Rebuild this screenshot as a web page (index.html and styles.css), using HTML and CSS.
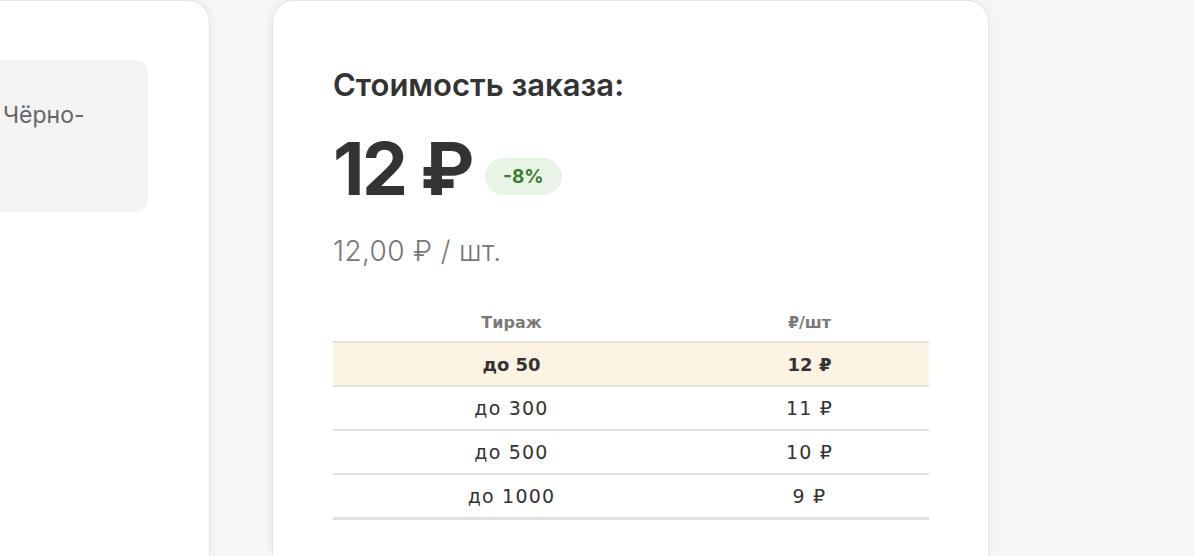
FILE: index.html
```html
<!DOCTYPE html>
<html lang="ru">
<head>
<meta charset="utf-8">
<title>Стоимость заказа</title>
<link rel="stylesheet" href="styles.css">
</head>
<body>
<div class="page">
  <section class="card card-left">
    <div class="option-box">
      <span class="option-text">Чёрно-</span>
    </div>
  </section>
  <section class="card card-right">
    <h2 class="title">Стоимость заказа:</h2>
    <div class="total">
      <span class="total-price">12 ₽</span>
      <span class="badge">-8%</span>
    </div>
    <div class="unit">12,00 ₽ / шт.</div>
    <table class="tiers">
      <thead>
        <tr><th class="c1">Тираж</th><th class="c2">₽/шт</th></tr>
      </thead>
      <tbody>
        <tr class="active"><td>до 50</td><td>12 ₽</td></tr>
        <tr><td>до 300</td><td>11 ₽</td></tr>
        <tr><td>до 500</td><td>10 ₽</td></tr>
        <tr class="last"><td>до 1000</td><td>9 ₽</td></tr>
      </tbody>
    </table>
  </section>
</div>
</body>
</html>
```

FILE: styles.css
```css
* { box-sizing: border-box; }
html, body {
  margin: 0;
  padding: 0;
  background: #f6f6f6;
  overflow: hidden;
  height: 556px;
}
body {
  font-family: "Inter", "Noto Sans", sans-serif;
  color: #333;
}
.page {
  display: flex;
  gap: 62px;
  margin-left: -251px;
  align-items: flex-start;
}
.card {
  background: #fff;
  border: 1px solid #e4e4e4;
  border-bottom: 0;
  border-radius: 22px 22px 0 0;
  box-shadow: 0 0 10px rgba(0, 0, 0, 0.06);
  height: 556px;
  flex: none;
}
.card-left {
  width: 461px;
  padding: 59px 61px 0 61px;
}
.option-box {
  background: #f4f4f4;
  border-radius: 12px;
  height: 152px;
  padding: 40px 0 0 192px;
}
.option-text {
  font-size: 23px;
  line-height: 30px;
  color: #666;
  font-weight: 400;
}
.card-right {
  width: 717px;
  padding: 64px 60px 0 60px;
}
.title {
  margin: 0;
  font-size: 31px;
  line-height: 40px;
  font-weight: 600;
  color: #333;
}
.total {
  display: flex;
  align-items: flex-start;
  gap: 13px;
  margin-top: 24px;
  height: 80px;
}
.total-price {
  font-size: 73px;
  line-height: 80px;
  font-weight: 700;
  color: #333;
  letter-spacing: -2.5px;
}
.badge {
  display: inline-flex;
  align-items: center;
  justify-content: center;
  background: #e8f5e6;
  color: #3b7a30;
  font-size: 19px;
  font-weight: 700;
  width: 77px;
  height: 37px;
  border-radius: 19px;
  margin-top: 29px;
}
.unit {
  margin-top: 25px;
  font-size: 28px;
  line-height: 34px;
  color: #777;
  font-weight: 300;
  letter-spacing: 0.4px;
}
.tiers {
  margin-top: 32px;
  width: 596px;
  border-collapse: collapse;
  font-family: "DejaVu Sans", "Noto Sans", sans-serif;
}
.tiers th {
  font-size: 16px;
  font-weight: 700;
  color: #7a7a7a;
  height: 42px;
  padding: 3px 0 0 0;
  text-align: center;
  border-bottom: 2px solid #e2e2e2;
}
.tiers .c1 { width: 357px; }
.tiers .c2 { width: 239px; }
.tiers td {
  font-size: 19px;
  letter-spacing: 1.2px;
  color: #333;
  text-align: center;
  height: 44px;
  padding: 0;
  border-bottom: 2px solid #e2e2e2;
}
.tiers tr.active td {
  background: #fdf3e3;
  font-weight: 700;
  font-size: 18px;
  letter-spacing: 0;
}
.tiers tr.last td {
  border-bottom: 3px solid #e0e0e0;
}
```
